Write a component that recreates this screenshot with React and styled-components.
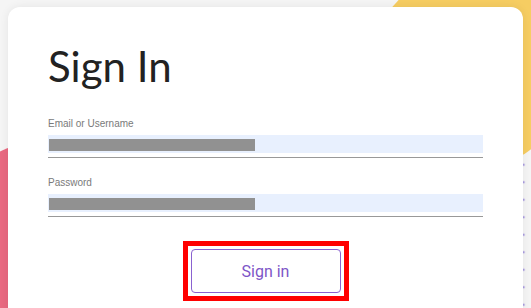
import React from "react";
import styled, { createGlobalStyle } from "styled-components";

const GlobalStyle = createGlobalStyle`
  html, body {
    margin: 0;
    padding: 0;
    background: #f5f5f5;
    overflow: hidden;
  }
`;

function App() {
  return (
    <>
      <GlobalStyle />
      <Page>
        <Dots />
        <YellowBlob />
        <PinkBlob />
        <Card>
          <Title>Sign In</Title>
          <Form>
            <Field>
              <Label>Email or Username</Label>
              <InputLine>
                <InputBox>
                  <Redacted />
                </InputBox>
              </InputLine>
            </Field>
            <Field>
              <Label>Password</Label>
              <InputLine>
                <InputBox>
                  <Redacted />
                </InputBox>
              </InputLine>
            </Field>
          </Form>
          <Actions>
            <Highlight>
              <Button type="button">Sign in</Button>
            </Highlight>
          </Actions>
        </Card>
      </Page>
    </>
  );
}

// Styled Components

const Page = styled.div`
  position: relative;
  height: 308px;
  overflow: hidden;
  padding: 7px 0 0 8px;
  box-sizing: border-box;
  background: #f5f5f5;
`;

const YellowBlob = styled.div`
  position: absolute;
  left: 370px;
  top: -30px;
  width: 200px;
  height: 200px;
  border-radius: 50%;
  background: #f6cd62;
`;

const PinkBlob = styled.div`
  position: absolute;
  left: -128px;
  top: 132px;
  width: 436px;
  height: 436px;
  border-radius: 50%;
  background: #e96981;
`;

const Dots = styled.div`
  position: absolute;
  left: 514px;
  top: 121px;
  width: 40px;
  height: 200px;
  background-image: radial-gradient(circle, #a99be0 1.2px, transparent 1.6px);
  background-size: 17.5px 17.5px;
  background-position: 0.75px 0;
`;

const Card = styled.div`
  position: relative;
  z-index: 1;
  width: 515px;
  height: 340px;
  box-sizing: border-box;
  padding: 34px 40px 0;
  background: #ffffff;
  border-radius: 12px;
  box-shadow: 0 0 10px rgba(0, 0, 0, 0.07);
`;

const Title = styled.h1`
  margin: 0;
  font-family: Lato, "Noto Sans", sans-serif;
  font-weight: 400;
  font-size: 42px;
  line-height: 50px;
  color: #222222;
`;

const Form = styled.div`
  display: flex;
  flex-direction: column;
  gap: 19px;
  margin-top: 27px;
`;

const Field = styled.div`
  display: flex;
  flex-direction: column;
  gap: 5px;
`;

const Label = styled.label`
  font-family: "Liberation Sans", Arial, sans-serif;
  font-size: 10px;
  line-height: 12px;
  color: #7a7a7a;
`;

const InputLine = styled.div`
  padding-bottom: 4px;
  border-bottom: 1px solid #999999;
`;

const InputBox = styled.div`
  height: 18px;
  background: #e8f0fe;
  display: flex;
  align-items: flex-start;
  padding: 4px 0 0 1px;
  box-sizing: border-box;
`;

const Redacted = styled.div`
  width: 206px;
  height: 12px;
  background: #919191;
`;

const Actions = styled.div`
  display: flex;
  justify-content: center;
  margin-top: 24px;
`;

const Highlight = styled.div`
  border: 5px solid #ff0000;
  padding: 3px;
  display: flex;
`;

const Button = styled.button`
  width: 150px;
  height: 44px;
  background: #ffffff;
  border: 1px solid #8a62d0;
  border-radius: 4px;
  font-family: Roboto, "Liberation Sans", sans-serif;
  font-size: 16px;
  color: #7d55c7;
  cursor: pointer;
`;

export default App;
